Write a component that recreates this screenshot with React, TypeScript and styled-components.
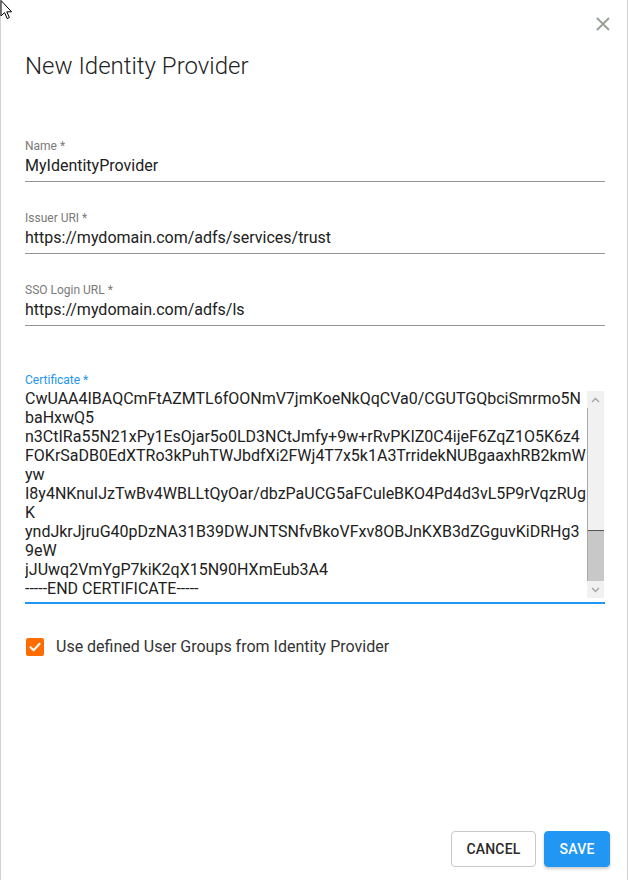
import React, { useLayoutEffect, useRef } from 'react';
import styled, { createGlobalStyle } from 'styled-components';

const GlobalStyle = createGlobalStyle`
  html, body {
    margin: 0;
    padding: 0;
    background: #fff;
    font-family: Roboto, "Liberation Sans", sans-serif;
  }
  * { box-sizing: border-box; }
`;

const Dialog = styled.div`
  position: relative;
  width: 628px;
  height: 880px;
  border-left: 1px solid #d2d2d2;
  border-right: 1px solid #d2d2d2;
  background: #fff;
  display: flex;
  flex-direction: column;
  padding: 0 22px 13px 24px;
`;

const Cursor = styled.svg`
  position: absolute;
  left: -1px;
  top: 0;
`;

const CloseButton = styled.button`
  position: absolute;
  top: 15px;
  right: 15px;
  width: 18px;
  height: 18px;
  padding: 0;
  border: none;
  background: none;
  cursor: pointer;
  display: flex;
  align-items: center;
  justify-content: center;
`;

const Title = styled.h2`
  margin: 52px 0 0;
  font-size: 24px;
  line-height: 28px;
  font-weight: 300;
  color: #222;
`;

const Form = styled.div`
  display: flex;
  flex-direction: column;
  margin-top: 59px;
`;

const Field = styled.div<{ $top?: number }>`
  display: flex;
  flex-direction: column;
  margin-top: ${({ $top }) => $top ?? 0}px;
`;

const Label = styled.label<{ $focused?: boolean }>`
  font-size: 12px;
  line-height: 14px;
  color: ${({ $focused }) => ($focused ? '#2196f3' : '#7a7a7a')};
`;

const Input = styled.input`
  border: none;
  border-bottom: 1px solid #949494;
  outline: none;
  padding: 3px 0 6px;
  font-family: inherit;
  font-size: 16px;
  line-height: 19px;
  height: 29px;
  color: #212121;
  background: transparent;
`;

const AreaBox = styled.div`
  margin-top: 2px;
  height: 215px;
  display: flex;
  border-bottom: 2px solid #2196f3;
`;

const TextArea = styled.textarea`
  flex: 1;
  min-width: 0;
  border: none;
  outline: none;
  resize: none;
  padding: 0 0 4px;
  font-family: inherit;
  font-size: 16px;
  line-height: 19px;
  color: #212121;
  caret-color: #000;
  white-space: pre;
  overflow: hidden;
  background: transparent;
`;

const ScrollBar = styled.div`
  width: 17px;
  margin: 2px 1px 4px 0;
  display: flex;
  flex-direction: column;
  background: #f1f1f1;
`;

const ScrollArrow = styled.div`
  height: 17px;
  flex: none;
  display: flex;
  align-items: center;
  justify-content: center;
`;

const ScrollTrack = styled.div`
  flex: 1;
  display: flex;
  flex-direction: column;
  justify-content: flex-end;
  border-left: 1px solid #a8a8a8;
`;

const ScrollThumb = styled.div`
  height: 51px;
  background: #c8c8c8;
  border-top: 1px solid #555;
`;

const CheckRow = styled.label`
  display: flex;
  align-items: center;
  gap: 12px;
  margin-top: 33px;
  font-size: 16px;
  color: #333;
  cursor: pointer;
`;

const CheckBox = styled.span`
  width: 18px;
  height: 18px;
  margin-left: 1px;
  border-radius: 2px;
  background: #ff6d00;
  display: flex;
  align-items: center;
  justify-content: center;
`;

const Actions = styled.div`
  margin-top: auto;
  margin-right: -5px;
  display: flex;
  justify-content: flex-end;
  gap: 8px;
`;

const Button = styled.button<{ $primary?: boolean }>`
  height: 36px;
  padding: 0 14.5px;
  border-radius: 4px;
  font-family: inherit;
  font-size: 14px;
  font-weight: 500;
  letter-spacing: 0.2px;
  text-transform: uppercase;
  cursor: pointer;
  border: 1px solid ${({ $primary }) => ($primary ? '#2196f3' : '#c8c8c8')};
  background: ${({ $primary }) => ($primary ? '#2196f3' : '#fff')};
  color: ${({ $primary }) => ($primary ? '#fff' : '#2a2a2a')};
  box-shadow: ${({ $primary }) =>
    $primary ? '0 2px 3px rgba(0,0,0,0.2)' : 'none'};
`;

const certHead = [
  '-----BEGIN CERTIFICATE-----',
  'MIIC2DCCAcCgAwIBAgIQFkp8lQj7r2tG5y0dQm3HVTANBgkqhkiG9w0BAQsFADAo',
  'MSYwJAYDVQQDEx1BREZTIFNpZ25pbmcgLSBteWRvbWFpbi5jb20wHhcNMjMwMTEy',
  'MTQwMjU1WhcNMjQwMTEyMTQwMjU1WjAoMSYwJAYDVQQDEx1BREZTIFNpZ25pbmcg',
  'LSBteWRvbWFpbi5jb20wggEiMA0GCSqGSIb3DQEBAQUAA4IBDwAwggEKAoIBAQC7',
  'q3dWn4l2hJk8fPzXc1s9Tt0Ry6eGfA5LmN0oPqRsTuVwXyZ2aB3cD4eF5gH6iJ7k',
  'L8mN9oP0qR1sT2uV3wX4yZ5aB6cD7eF8gH9iJ0kL1mN2oP3qR4sT5uV6wX7yZ8a',
  'B9cD0eF1gH2iJ3kL4mN5oP6qR7sT8uV9wX0yZ1aB2cD3eF4gH5iJ6kL7mN8oP9q',
  'R0sT1uV2wX3yZ4aB5cD6eF7gH8iJ9kL0mN1oP2qR3sT4uV5wX6yZ7aB8cD9eF0g',
  'H1iJ2kL3mN4oP5qR6sT7uV8wX9yZ0aB1cD2eF3gH4iJ5kL6mN7oP8qR9sT0uV1w',
  'X2yZ3aB4cD5eF6gH7iJ8kL9mN0oP1qR2sT3uV4wX5yZ6aB7cD8eF9gH0iJ1kL2m',
  'N3oP4qR5sT6uV7wX8yZ9aB0cD1eF2gH3iJ4kL5mN6oP7qR8sT9uV0wX1yZ2aB3c',
  'D4eF5gH6iJ7kL8mN9oP0qR1sT2uV3wX4yZ5aB6cD7eF8gH9iJ0kL1mN2oP3qR4s',
  'T5uV6wX7yZ8aB9cD0eF1gH2iJ3kL4mN5oP6qR7sT8uV9wX0yZ1aB2cD3eF4gH5i',
  'J6kL7mN8oP9qR0sT1uV2wX3yZ4aB5cD6eF7gH8iJ9kL0mN1oP2qR3sT4uV5wX6y',
  'Z7aB8cD9eF0gH1iJ2kL3mN4oP5qR6sT7uV8wX9yZ0aB1cD2eF3gH4iJ5kL6mN7o',
  'P8qR9sT0uV1wX2yZ3aB4cD5eF6gH7iJ8kL9mN0oP1qR2sT3uV4wX5yZ6aB7cD8e',
  'F9gH0iJ1kL2mN3oP4qR5sT6uV7wX8yZ9aB0cD1eF2gH3iJ4kL5mN6oP7qR8sT9u',
  'V0wX1yZ2aB3cD4eF5gH6iJ7kL8mN9oP0qR1sT2uV3wX4yZ5aB6cD7eF8gH9iJ0k',
  'L1mN2oP3qR4sT5uV6wX7yZ8aB9cD0eF1gH2iJ3kL4mN5oP6qR7sT8uV9wX0yZ1a',
  'B2cD3eF4gH5iJ6kL7mN8oP9qR0sT1uV2wX3yZ4aB5cD6eF7gH8iJ9kL0mN1oP2q',
  'R3sT4uV5wX6yZ7aB8cD9eF0gH1iJ2kL3mN4oP5qR6sT7uV8wX9yZ0aB1cD2eF3g',
  'H4iJ5kL6mN7oP8qR9sT0uV1wX2yZ3aB4cD5eF6gH7iJ8kL9mN0oP1qR2sT3uV4w',
  'X5yZ6aB7cD8eF9gH0iJ1kL2mN3oP4qR5sT6uV7wX8yZ9aB0cD1eF2gH3iJ4kL5m',
];

const certTail = [
  'CwUAA4IBAQCmFtAZMTL6fOONmV7jmKoeNkQqCVa0/CGUTGQbciSmrmo5N',
  'baHxwQ5',
  'n3CtIRa55N21xPy1EsOjar5o0LD3NCtJmfy+9w+rRvPKIZ0C4ijeF6ZqZ1O5K6z4',
  'FOKrSaDB0EdXTRo3kPuhTWJbdfXi2FWj4T7x5k1A3TrridekNUBgaaxhRB2kmW',
  'yw',
  'I8y4NKnuIJzTwBv4WBLLtQyOar/dbzPaUCG5aFCuleBKO4Pd4d3vL5P9rVqzRUg',
  'K',
  'yndJkrJjruG40pDzNA31B39DWJNTSNfvBkoVFxv8OBJnKXB3dZGguvKiDRHg3',
  '9eW',
  'jJUwq2VmYgP7kiK2qX15N90HXmEub3A4',
  '-----END CERTIFICATE-----',
];

const certificate = [...certHead, ...certTail].join('\n');

const Chevron: React.FC<{ up?: boolean }> = ({ up }) => (
  <svg width="9" height="6" viewBox="0 0 9 6">
    <path
      d={up ? 'M1 5 L4.5 1.5 L8 5' : 'M1 1 L4.5 4.5 L8 1'}
      fill="none"
      stroke="#a3a3a3"
      strokeWidth="1.3"
    />
  </svg>
);

const App: React.FC = () => {
  const areaRef = useRef<HTMLTextAreaElement>(null);

  useLayoutEffect(() => {
    const el = areaRef.current;
    if (!el) return;
    el.focus({ preventScroll: true });
    el.setSelectionRange(el.value.length, el.value.length);
    el.scrollTop = el.scrollHeight;
  }, []);

  return (
    <>
      <GlobalStyle />
      <Dialog>
        <Cursor width="13" height="20" viewBox="0 0 13 20">
          <path
            d="M1 0.5 L1 16 L4.6 12.6 L7.2 18.6 L9.4 17.6 L6.8 11.8 L11.6 11.8 Z"
            fill="#fff"
            stroke="#000"
            strokeWidth="1"
            strokeLinejoin="round"
          />
        </Cursor>
        <CloseButton aria-label="Close">
          <svg width="14" height="14" viewBox="0 0 14 14">
            <path d="M1 1 L13 13 M13 1 L1 13" stroke="#979e92" strokeWidth="1.8" />
          </svg>
        </CloseButton>

        <Title>New Identity Provider</Title>

        <Form>
          <Field>
            <Label>Name *</Label>
            <Input defaultValue="MyIdentityProvider" />
          </Field>
          <Field $top={29}>
            <Label>Issuer URI *</Label>
            <Input defaultValue="https://mydomain.com/adfs/services/trust" />
          </Field>
          <Field $top={29}>
            <Label>SSO Login URL *</Label>
            <Input defaultValue="https://mydomain.com/adfs/ls" />
          </Field>
          <Field $top={47}>
            <Label $focused>Certificate *</Label>
            <AreaBox>
              <TextArea ref={areaRef} defaultValue={certificate} spellCheck={false} />
              <ScrollBar>
                <ScrollArrow>
                  <Chevron up />
                </ScrollArrow>
                <ScrollTrack>
                  <ScrollThumb />
                </ScrollTrack>
                <ScrollArrow>
                  <Chevron />
                </ScrollArrow>
              </ScrollBar>
            </AreaBox>
          </Field>
        </Form>

        <CheckRow>
          <CheckBox>
            <svg width="14" height="14" viewBox="0 0 14 14">
              <path
                d="M2.5 7.2 L5.6 10.2 L11.6 3.8"
                fill="none"
                stroke="#fff"
                strokeWidth="2"
                strokeLinecap="round"
                strokeLinejoin="round"
              />
            </svg>
          </CheckBox>
          Use defined User Groups from Identity Provider
        </CheckRow>

        <Actions>
          <Button>Cancel</Button>
          <Button $primary>Save</Button>
        </Actions>
      </Dialog>
    </>
  );
};

export default App;
